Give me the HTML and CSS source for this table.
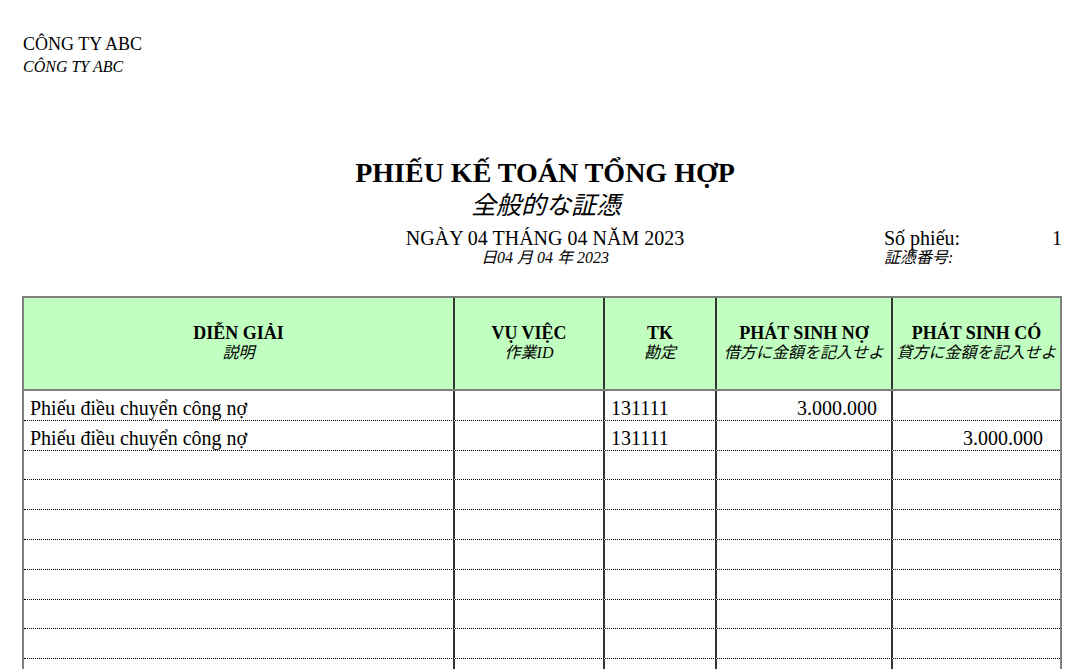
FILE: index.html
```html
<!DOCTYPE html>
<html lang="vi">
<head>
<meta charset="utf-8">
<title>Phiếu kế toán tổng hợp</title>
<link rel="stylesheet" href="styles.css">
</head>
<body>
<div class="page">
  <div class="company">
    <div class="co-name">CÔNG TY ABC</div>
    <div class="co-name-jp">CÔNG TY ABC</div>
  </div>

  <div class="title-block">
    <h1 class="title">PHIẾU KẾ TOÁN TỔNG HỢP</h1>
    <div class="title-jp">全般的な証憑</div>
  </div>

  <div class="date-row">
    <div class="spacer"></div>
    <div class="date">
      <div class="date-vn">NGÀY 04 THÁNG 04 NĂM 2023</div>
      <div class="date-jp">日04 月 04 年 2023</div>
    </div>
    <div class="voucher">
      <div class="voucher-line"><span>Số phiếu:</span><span>1</span></div>
      <div class="voucher-jp">証憑番号:</div>
    </div>
  </div>

  <div class="sheet">
    <div class="row head">
      <div class="cell"><div class="h-vn">DIỄN GIẢI</div><div class="h-jp">説明</div></div>
      <div class="cell"><div class="h-vn">VỤ VIỆC</div><div class="h-jp">作業ID</div></div>
      <div class="cell"><div class="h-vn">TK</div><div class="h-jp">勘定</div></div>
      <div class="cell"><div class="h-vn">PHÁT SINH NỢ</div><div class="h-jp">借方に金額を記入せよ</div></div>
      <div class="cell"><div class="h-vn">PHÁT SINH CÓ</div><div class="h-jp">貸方に金額を記入せよ</div></div>
    </div>
    <div class="row data">
      <div class="cell">Phiếu điều chuyển công nợ</div>
      <div class="cell"></div>
      <div class="cell">131111</div>
      <div class="cell num debit">3.000.000</div>
      <div class="cell num credit"></div>
    </div>
    <div class="row data">
      <div class="cell">Phiếu điều chuyển công nợ</div>
      <div class="cell"></div>
      <div class="cell">131111</div>
      <div class="cell num debit"></div>
      <div class="cell num credit">3.000.000</div>
    </div>
    <div class="row data"><div class="cell"></div><div class="cell"></div><div class="cell"></div><div class="cell"></div><div class="cell"></div></div>
    <div class="row data"><div class="cell"></div><div class="cell"></div><div class="cell"></div><div class="cell"></div><div class="cell"></div></div>
    <div class="row data"><div class="cell"></div><div class="cell"></div><div class="cell"></div><div class="cell"></div><div class="cell"></div></div>
    <div class="row data"><div class="cell"></div><div class="cell"></div><div class="cell"></div><div class="cell"></div><div class="cell"></div></div>
    <div class="row data"><div class="cell"></div><div class="cell"></div><div class="cell"></div><div class="cell"></div><div class="cell"></div></div>
    <div class="row data"><div class="cell"></div><div class="cell"></div><div class="cell"></div><div class="cell"></div><div class="cell"></div></div>
    <div class="row data"><div class="cell"></div><div class="cell"></div><div class="cell"></div><div class="cell"></div><div class="cell"></div></div>
    <div class="row data"><div class="cell"></div><div class="cell"></div><div class="cell"></div><div class="cell"></div><div class="cell"></div></div>
  </div>
</div>
</body>
</html>
```

FILE: styles.css
```css
html, body {
  margin: 0;
  padding: 0;
  background: #ffffff;
}

.page {
  width: 1090px;
  height: 669px;
  overflow: hidden;
  font-family: "Liberation Serif", "Noto Sans CJK JP", serif;
  color: #000000;
}

/* company */
.company {
  padding: 34px 0 0 23px;
}
.co-name {
  font-size: 18px;
  line-height: 20px;
}
.co-name-jp {
  margin-top: 3px;
  font-size: 16px;
  line-height: 20px;
  font-style: italic;
}

/* title */
.title-block {
  margin-top: 80px;
  text-align: center;
}
.title {
  margin: 0;
  font-size: 28px;
  line-height: 32px;
  font-weight: bold;
}
.title-jp {
  padding: 2px 0 0 2px;
  font-size: 25px;
  line-height: 30px;
  font-style: italic;
}

/* date + voucher */
.date-row {
  margin-top: 7px;
  display: grid;
  grid-template-columns: 1fr auto 1fr;
}
.date {
  text-align: center;
}
.date-vn {
  font-size: 20px;
  line-height: 20px;
  white-space: nowrap;
}
.date-jp {
  margin-top: 3px;
  font-size: 16px;
  line-height: 14px;
  font-style: italic;
  white-space: nowrap;
}
.voucher {
  justify-self: end;
  width: 178px;
  margin-right: 28px;
}
.voucher-line {
  display: flex;
  justify-content: space-between;
  font-size: 20px;
  line-height: 20px;
}
.voucher-jp {
  margin-top: 3px;
  font-size: 16px;
  line-height: 14px;
  font-style: italic;
}

/* table */
.sheet {
  margin: 31px 0 0 22px;
  width: 1040px;
  box-sizing: border-box;
  border: 2px solid #808080;
}
.row {
  display: grid;
  grid-template-columns: 429px 150px 112px 176px 169px;
}
.cell {
  box-sizing: border-box;
  white-space: nowrap;
  overflow: hidden;
}
.cell + .cell {
  border-left: 2px solid #333333;
}

.head {
  height: 93px;
  background: #c0ffc0;
  border-bottom: 2px solid #808080;
  box-sizing: border-box;
}
.head .cell {
  padding-top: 24px;
  text-align: center;
}
.h-vn {
  font-size: 18px;
  line-height: 22px;
  font-weight: bold;
}
.h-jp {
  font-size: 16px;
  line-height: 18px;
  font-style: italic;
}

.data {
  height: 29.8px;
  box-sizing: border-box;
  border-bottom: 1px dotted #000000;
}
.data .cell {
  display: flex;
  align-items: flex-end;
  padding-left: 6px;
  font-size: 20px;
  line-height: 23px;
}
.data .num {
  justify-content: flex-end;
}
.data .debit {
  padding-right: 14px;
}
.data .credit {
  padding-right: 17px;
}
```
